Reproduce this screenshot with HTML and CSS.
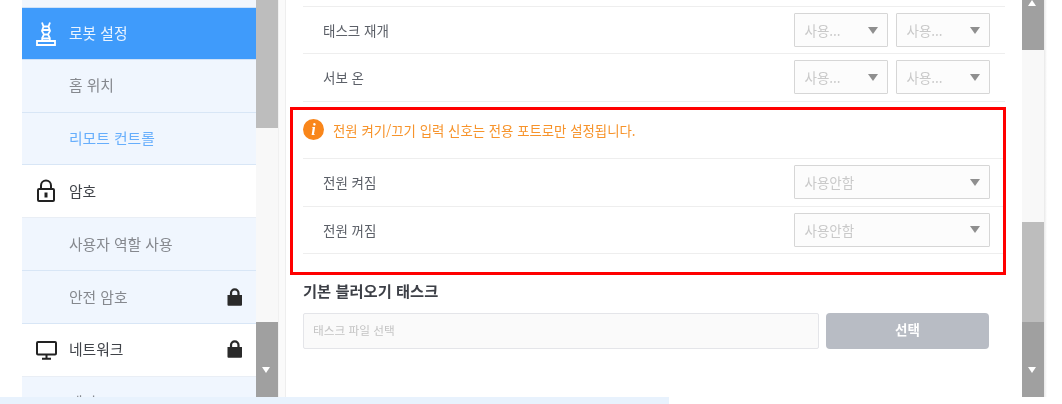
FILE: index.html
```html
<!DOCTYPE html>
<html lang="ko">
<head>
<meta charset="utf-8">
<title>로봇 설정</title>
<link rel="stylesheet" href="styles.css">
</head>
<body>
<div class="app">
  <nav class="sidebar">
    <div class="side-top"></div>
    <div class="item active">
      <svg class="ico" viewBox="0 0 20 24" fill="none" stroke="#fff" stroke-width="1.8"><path d="M6 0.500l1.500 4h5L14 0.500M7.500 4.500L6 9l2 3.500L6.200 16v3M12.500 4.500L14 9l-2 3.500 1.800 3.500v3M7 8h6M7.500 12.500h5"/><path d="M6.200 16.500h7.600M1 19h18v4H1z"/></svg>
      <span>로봇 설정</span>
    </div>
    <div class="item sub"><span>홈 위치</span></div>
    <div class="item sub link"><span>리모트 컨트롤</span></div>
    <div class="item">
      <svg class="ico" viewBox="0 0 20 24" fill="none" stroke="#222" stroke-width="2"><path d="M5 10V6.500a5 5 0 0 1 10 0V10"/><rect x="2" y="10" width="16" height="12" rx="1"/><path d="M10 13.500v5" stroke-width="3"/></svg>
      <span>암호</span>
    </div>
    <div class="item sub"><span>사용자 역할 사용</span></div>
    <div class="item sub"><span>안전 암호</span><svg class="lock" viewBox="0 0 16 19"><path d="M3 8V6a5 5 0 0 1 10 0v2h2.500v10a1 1 0 0 1-1 1h-13a1 1 0 0 1-1-1V8zM5.300 8h5.400V6a2.700 2.700 0 0 0-5.400 0z" fill="#2a2a2a"/></svg></div>
    <div class="item">
      <svg class="ico mon" viewBox="0 0 21 19" fill="none" stroke="#222" stroke-width="2"><rect x="1" y="1" width="19" height="12.500" rx="1"/><path d="M10.500 13.500v4M6 17.800h9"/></svg>
      <span>네트워크</span><svg class="lock" viewBox="0 0 16 19"><path d="M3 8V6a5 5 0 0 1 10 0v2h2.500v10a1 1 0 0 1-1 1h-13a1 1 0 0 1-1-1V8zM5.300 8h5.400V6a2.700 2.700 0 0 0-5.400 0z" fill="#2a2a2a"/></svg>
    </div>
    <div class="item sub"><span>게이트</span></div>
  </nav>
  <div class="bar bar-left">
    <div class="thumb thumb-a"></div>
    <div class="track track-a"></div>
    <div class="btn"><i class="arrow down"></i></div>
  </div>
  <div class="gutter"></div>
  <main class="main">
    <div class="row first">
      <span>태스크 재개</span>
      <div class="pair"><div class="sel"><span>사용...</span><i class="caret"></i></div><div class="sel"><span>사용...</span><i class="caret"></i></div></div>
    </div>
    <div class="row">
      <span>서보 온</span>
      <div class="pair"><div class="sel"><span>사용...</span><i class="caret"></i></div><div class="sel"><span>사용...</span><i class="caret"></i></div></div>
    </div>
    <section class="redbox">
      <div class="notice"><b class="info">i</b><span>전원 켜기/끄기 입력 신호는 전용 포트로만 설정됩니다.</span></div>
      <div class="row">
        <span>전원 켜짐</span>
        <div class="sel wide"><span>사용안함</span><i class="caret"></i></div>
      </div>
      <div class="row">
        <span>전원 꺼짐</span>
        <div class="sel wide"><span>사용안함</span><i class="caret"></i></div>
      </div>
    </section>
    <h3 class="title">기본 블러오기 태스크</h3>
    <div class="file">
      <div class="input">태스크 파일 선택</div>
      <div class="pick">선택</div>
    </div>
  </main>
  <div class="bar bar-right">
    <div class="btn btn-up"><i class="arrow up"></i></div>
    <div class="track track-b"></div>
    <div class="thumb thumb-b"></div>
    <div class="btn"><i class="arrow down"></i></div>
  </div>
  <div class="edge"></div>
</div>
<div class="strip"></div>
</body>
</html>
```
FILE: styles.css
```css
* { box-sizing: border-box; }
html, body { margin: 0; padding: 0; background: #fff; overflow: hidden; }
body {
  width: 1062px;
  height: 404px;
  font-family: "Noto Sans CJK KR", "Noto Sans", sans-serif;
  font-size: 13.5px;
  color: #5c6068;
}
.app {
  display: flex;
  height: 397px;
  padding-left: 22px;
  overflow: hidden;
  filter: blur(0.4px);
}
.sidebar { width: 234px; flex: none; display: flex; flex-direction: column; overflow: hidden; font-size: 14.8px; }
.side-top { height: 7px; flex: none; background: #f1f6fd; }
.item {
  height: 52.800px;
  flex: none;
  display: flex;
  align-items: center;
  padding: 0 14px 1.500px 47px;
  position: relative;
  background: #fff;
  color: #3f4248;
  border-bottom: 1px solid #e9eef5;
}
.item > span { flex: 1; }
.item.active { background: #3f9bfb; color: #eaf4ff; border-top: 1px solid #cfe2f8; border-bottom: 1px solid #cfe2f8; }
.item.sub { background: #f0f6fe; color: #85888e; border-bottom: 1px solid #d8e6f6; }
.item.link { color: #66aefc; }
.ico { position: absolute; left: 14px; top: 14px; width: 20px; height: 24px; }
.ico.mon { top: 17px; height: 19px; width: 21px; }
.lock { width: 15.500px; height: 19px; flex: none; }
.bar { width: 22px; flex: none; display: flex; flex-direction: column; background: #f8f8f8; }
.thumb { background: #bdbdbd; flex: none; }
.track { flex: none; background: #f8f8f8; }
.thumb-a { height: 128px; }
.track-a { height: 194px; }
.btn { background: #a0a0a0; flex: 1; position: relative; }
.btn-up { flex: none; height: 50px; }
.track-b { height: 172px; }
.thumb-b { height: 100px; }
.arrow { position: absolute; left: 6px; width: 0; height: 0; border-left: 4.500px solid transparent; border-right: 4.500px solid transparent; }
.arrow.down { top: 45px; border-top: 6px solid #fff; }
.arrow.up { top: 0; border-bottom: 6px solid #fff; }
.gutter { width: 8px; flex: none; background: #fafafa; border-left: 1px solid #f0f0f0; border-right: 1px solid #eeeeee; }
.main { width: 736px; flex: none; padding: 6px 17px 0; background: #fff; }
.row {
  display: flex;
  align-items: center;
  justify-content: space-between;
  height: 47.500px;
  padding: 0 15px 0 20px;
  border-bottom: 1.500px solid #eeeeee;
}
.row.first { border-top: 1.500px solid #eeeeee; height: 48px; }
.pair { display: flex; gap: 8px; }
.sel {
  width: 94px;
  height: 34px;
  border: 1.500px solid #d6d6d6;
  border-radius: 1px;
  background: #fcfcfc;
  color: #c9c9c9;
  display: flex;
  align-items: center;
  justify-content: space-between;
  padding: 0 9.500px;
}
.sel.wide { width: 196px; }
.caret { width: 0; height: 0; border-left: 5.500px solid transparent; border-right: 5.500px solid transparent; border-top: 7px solid #8f8f8f; }
.redbox {
  margin: 5px -1px 0 -13px;
  height: 168px;
  border: 3px solid #ff0000;
  padding: 0 0 0 10px;
}
.redbox .row { padding-right: 13px; }
.notice {
  height: 49.500px;
  display: flex;
  align-items: center;
  gap: 9px;
  padding-bottom: 8px;
  font-size: 13.400px;
  color: #f7932a;
  border-bottom: 1.500px solid #eeeeee;
}
.info {
  width: 21px;
  height: 21px;
  border-radius: 50%;
  background: #f9861a;
  color: #fff;
  font: italic bold 16px/21px "Liberation Serif", serif;
  text-align: center;
  flex: none;
}
.title { margin: 4px 0 0; font-size: 15.300px; font-weight: 700; color: #3d4047; line-height: 22px; }
.file { display: flex; gap: 7px; margin-top: 12.500px; padding-right: 16px; }
.input {
  width: 516px;
  height: 35.500px;
  border: 1.500px solid #e4e5e9;
  border-radius: 2px;
  background: #fafafa;
  color: #c4c4c4;
  font-size: 11.700px;
  line-height: 32px;
  padding-left: 9px;
}
.pick {
  flex: 1;
  height: 35.500px;
  background: #b8bcc4;
  border-radius: 4px;
  color: #fff;
  font-weight: 700;
  font-size: 13.500px;
  line-height: 33px;
  text-align: center;
}
.edge { width: 3px; flex: none; background: linear-gradient(90deg, #e8e8e8, #fff); }
.strip { width: 669px; height: 7px; background: #e8f2fd; }
```
